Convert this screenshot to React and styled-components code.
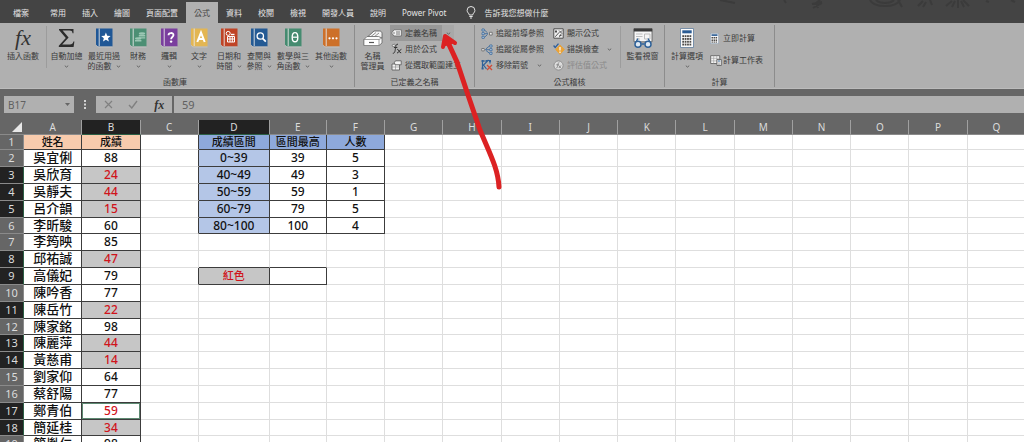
import React from "react";
import styled, { createGlobalStyle, css } from "styled-components";

const GlobalStyle = createGlobalStyle`
  * { box-sizing: border-box; }
  body { margin: 0; background: #fff; }
  body, button, input {
    font-family: "Noto Sans", "Noto Sans CJK TC", sans-serif;
  }
  button { border: 0; padding: 0; background: none; color: inherit; }
  svg { display: block; flex: none; }
`;

const Workbook = styled.div`
  position: relative;
  height: 100vh;
  display: flex;
  flex-direction: column;
  overflow: hidden;
`;

/* ---------- title tabs ---------- */

const TabBar = styled.nav`
  display: flex;
  align-items: stretch;
  height: 23px;
  flex: none;
  padding-top: 2px;
  background: #444;
`;

const Tab = styled.button`
  padding: 0 ${(p) => (p.$wide ? 13 : 8)}px;
  font-size: 8px;
  line-height: 20px;
  white-space: nowrap;
  color: ${(p) => (p.$active ? "#444" : "#e4e4e4")};
  background: ${(p) => (p.$active ? "#b0b0b0" : "transparent")};
`;

const TellMe = styled.label`
  display: flex;
  align-items: center;
  gap: 8px;
  padding-left: 12px;
  padding-bottom: 1px;
`;

const TellMeInput = styled.input`
  width: 90px;
  border: 0;
  padding: 0;
  background: none;
  font-size: 8px;
  color: #e4e4e4;
  &::placeholder { color: #e4e4e4; opacity: 1; }
`;

const Doodle = styled.div`
  flex: 1;
  display: flex;
  justify-content: flex-end;
  margin-top: -2px;
`;

/* ---------- ribbon ---------- */

const Ribbon = styled.div`
  display: flex;
  height: 66px;
  flex: none;
  padding: 2px 0 1px;
  background: #b0b0b0;
  border-bottom: 1px solid #bcbcbc;
  color: #3a3a3a;
`;

const Group = styled.section`
  display: flex;
  flex-direction: column;
  justify-content: space-between;
  padding-right: ${(p) => p.$right || 0}px;
  border-right: 1px solid #8c8c8c;
`;

const GroupBody = styled.div`
  display: flex;
  align-items: flex-start;
`;

const GroupTitle = styled.h2`
  margin: 0;
  font-size: 8px;
  font-weight: 400;
  line-height: 10px;
  text-align: center;
`;

const BigButton = styled.button`
  width: ${(p) => p.$w}px;
  display: flex;
  flex-direction: column;
  align-items: center;
  padding-top: 3px;
  font-size: 8px;
  line-height: 10px;
  white-space: nowrap;
`;

const BigIcon = styled.span`
  height: 20px;
  margin-bottom: 3px;
  display: flex;
  align-items: center;
`;

const LabelLine = styled.span`
  display: flex;
  align-items: center;
  gap: 4px;
  height: 10px;
`;

const Divider = styled.span`
  width: 1px;
  height: 42px;
  margin-top: 1px;
  background: #9c9c9c;
`;

const Stack = styled.div`
  display: flex;
  flex-direction: column;
  padding: ${(p) => p.$pad || 0}px 0 0 ${(p) => p.$left || 0}px;
  gap: ${(p) => p.$gap || 0}px;
  width: ${(p) => p.$w}px;
`;

const SmallButton = styled.button`
  display: flex;
  align-items: center;
  align-self: flex-start;
  gap: ${(p) => p.$gap || 3}px;
  height: 16px;
  padding: 0 5px 0 1px;
  font-size: 8px;
  line-height: 16px;
  white-space: nowrap;
  color: ${(p) => (p.disabled ? "#8a8a8a" : "#3a3a3a")};
  background: ${(p) => (p.$hot ? "#989898" : "transparent")};
`;

const SplitRow = styled.div`
  display: flex;
  align-items: stretch;
`;

const SplitArrow = styled.button`
  display: flex;
  align-items: center;
  justify-content: center;
  width: 12px;
  background: #a8a8a8;
`;

const ChevronGap = styled.span`
  padding-left: ${(p) => p.$x}px;
`;

/* ---------- formula bar ---------- */

const FormulaBar = styled.div`
  display: flex;
  align-items: center;
  height: 31px;
  flex: none;
  padding: 0 0 0 4px;
  background: #666;
`;

const field = css`
  height: 17px;
  background: #b0b0b0;
  border: 0;
`;

const NameBox = styled.div`
  ${field}
  width: 70px;
  display: flex;
  align-items: center;
  padding: 0 4px;
`;

const BarInput = styled.input`
  flex: 1;
  min-width: 0;
  height: 17px;
  border: 0;
  padding: 0;
  background: none;
  font-size: ${(p) => p.$size}px;
  color: #606060;
`;

const Dots = styled.span`
  width: 22px;
  display: flex;
  justify-content: center;
`;

const Actions = styled.div`
  ${field}
  width: 76px;
  margin-right: 2px;
  display: flex;
  align-items: center;
  justify-content: space-around;
`;

const FormulaField = styled.div`
  ${field}
  flex: 1;
  display: flex;
  padding-left: 8px;
`;

/* ---------- sheet ---------- */

const SheetArea = styled.main`
  flex: 1;
  min-height: 0;
  overflow: hidden;
  background: #fff;
`;

const Sheet = styled.table`
  width: calc(100% + 2px);
  table-layout: fixed;
  border-collapse: separate;
  border-spacing: 0;
`;

const Col = styled.col`
  width: ${(p) => (p.$w ? `${p.$w}px` : "auto")};
`;

const ColHead = styled.th`
  height: 14px;
  padding: 0;
  font-size: 10px;
  font-weight: 400;
  line-height: 13px;
  color: #dcdcdc;
  background: ${(p) => (p.$on ? "#222" : "#666")};
  border-right: 1px solid #a0a0a0;
  border-bottom: 1px solid ${(p) => (p.$on ? "#2c6046" : "#8a8a8a")};
`;

const Corner = styled.th`
  height: 14px;
  padding: 2px 2px 2px 0;
  background: #666;
  border-bottom: 1px solid #8a8a8a;
  svg { margin-left: auto; }
`;

/* Every sixth row is one pixel shorter, which averages out the scaled row height. */
const Row = styled.tr`
  height: 17px;
  &:first-child { height: 15px; }
  &:nth-child(6n) { height: 16px; }
`;

const RowHead = styled.th`
  padding: 0;
  font-size: 11px;
  font-weight: 400;
  line-height: 14px;
  color: #dcdcdc;
  background: ${(p) => (p.$on ? "#222" : "#666")};
  border-right: 1px solid ${(p) => (p.$on ? "#2c6046" : "#8a8a8a")};
  border-bottom: 1px solid #8a8a8a;
`;

const fills = {
  peach: "#f8cbad",
  blue: "#8ea9db",
  sky: "#b4c6e7",
  gray: "#c6c6c6",
};

const Cell = styled.td`
  padding: 0 0 ${(p) => (p.$name ? 2 : 0)}px;
  text-align: center;
  white-space: nowrap;
  font-size: ${(p) => (p.$name ? 13 : p.$label ? 11 : 12)}px;
  font-weight: 500;
  line-height: ${(p) => (p.$name ? 12 : 14)}px;
  color: ${(p) => (p.$red ? "#d0141c" : "#111")};
  background: ${(p) => fills[p.$fill] || "#fff"};
  border-right: 1px solid ${(p) => (p.$right ? "#3c3c3c" : "#dedede")};
  border-bottom: 1px solid ${(p) => (p.$bottom ? "#3c3c3c" : "#dedede")};
  ${(p) => p.$active && css`box-shadow: inset 0 0 0 1px #5e8a72;`}
`;

const Annotation = styled.svg`
  position: absolute;
  left: 0;
  top: 0;
  pointer-events: none;
`;

/* ---------- icons ---------- */

const Chevron = ({ color = "#666" }) => (
  <svg width="5" height="3" viewBox="0 0 5 3" aria-hidden="true">
    <path d="M.8.7 2.5 2.1 4.2.7" fill="none" stroke={color} strokeWidth="1" />
  </svg>
);

const FxGlyph = styled.span`
  display: block;
  font: italic ${(p) => p.$s}px "Liberation Serif", serif;
  line-height: ${(p) => (p.$b ? 12 : 20)}px;
  font-weight: ${(p) => (p.$b ? 700 : 400)};
  color: #333;
`;

const Sigma = () => (
  <svg width="17" height="20" viewBox="0 0 17 20">
    <path d="M1 1h14.5v4.2h-1c-.3-2-1-2.6-3-2.6H4.6l6 6.8-6.4 7.2h7.6c2.200 0 3-.8 3.600-3h1L15.600 19H.8v-1.200l7-7.900L1 2z" fill="#2c2c2c" />
  </svg>
);

const Book = ({ color, children }) => (
  <svg width="18" height="20" viewBox="0 0 18 20">
    <path d="M1 .5h16.500v18H3.500a2.500 2.500 0 0 1-2.500-2z" fill={color} />
    <path d="M1.300 17.200c.5 1.300 1.300 1.800 2.500 1.800h13.700" fill="none" stroke="#c8c8c8" strokeWidth=".8" />
    <path d="M4.200.5v17.500" stroke="#e6e6e6" strokeWidth=".9" />
    {children}
  </svg>
);

const bookArt = {
  star: <path d="m10.900 4.600 1.300 3.200 3.400.2-2.600 2.200.9 3.400-3-1.900-2.900 1.900.8-3.400-2.600-2.200 3.400-.2z" fill="#fff" />,
  coins: (
    <g fill="#9cc7b4">
      <ellipse cx="13" cy="5.500" rx="3.200" ry="1.300" />
      <path d="M9.800 7h6.400v1.500H9.800zM9.800 9.300h6.400v1.300H9.800zM6 12h6.400v1.400H6z" />
      <ellipse cx="9.200" cy="10.500" rx="3.200" ry="1.200" />
    </g>
  ),
  question: (
    <g>
      <path d="M8.500 7.300c0-3 5-3 5-.2 0 1.900-2.400 2-2.400 4.100" fill="none" stroke="#fff" strokeWidth="1.800" />
      <circle cx="11.100" cy="13.600" r="1.200" fill="#fff" />
    </g>
  ),
  calendar: (
    <g fill="none" stroke="#fff">
      <circle cx="8.200" cy="5.400" r="2" strokeWidth="1" />
      <path d="M7.500 8.500h7v5.500h-7zM7.500 11h7M10 8.500V14M12.300 8.500V14" strokeWidth="1" />
      <path d="M11 6.500h3.500" strokeWidth="1.400" />
    </g>
  ),
  lens: (
    <g fill="none" stroke="#fff">
      <circle cx="10.300" cy="8" r="3.200" strokeWidth="1.300" />
      <path d="m12.600 10.300 3.200 3.400" strokeWidth="1.700" />
    </g>
  ),
  theta: (
    <g fill="none" stroke="#fff" strokeWidth="1.400">
      <ellipse cx="11" cy="9.200" rx="2.800" ry="4.600" />
      <path d="M8.500 9.200h5" strokeWidth="1.200" />
    </g>
  ),
  dots: (
    <g fill="#fff">
      <circle cx="7.500" cy="10.300" r="1.100" />
      <circle cx="11" cy="10.300" r="1.100" />
      <circle cx="14.500" cy="10.300" r="1.100" />
    </g>
  ),
  letter: <path d="M7.300 14 11 4.600 14.700 14M8.700 11h4.600" fill="none" stroke="#fff" strokeWidth="2" />,
};

const NameManagerIcon = () => (
  <svg width="20" height="18" viewBox="0 0 20 18">
    <path d="M5 7.500 11 2h5.500c1.500 0 2.500 1 2.500 2.500V9z" fill="#f4f4f4" stroke="#555" strokeWidth=".8" />
    <path d="m8 7.500 5-4M11 8l5-4" stroke="#777" strokeWidth=".8" />
    <path d="M1 10.500 4 7.500h11.500L19 9v5l-3 2.500H1z" fill="#fafafa" stroke="#666" strokeWidth=".8" />
    <path d="M1 10.500h15v6H1zM16 10.500 19 9" fill="#fff" stroke="#777" strokeWidth=".7" />
    <path d="M6 13.500h5" stroke="#555" strokeWidth="1.200" />
  </svg>
);

const TagIcon = () => (
  <svg width="11" height="10" viewBox="0 0 11 10">
    <path d="M3 1.800h7.400v6.200H3L.6 5z" fill="#f2f2f2" stroke="#666" strokeWidth=".8" />
    <circle cx="3" cy="5" r=".7" fill="#555" />
    <path d="M5 4h4M5 6h4" stroke="#555" strokeWidth=".8" />
  </svg>
);

const UseFormulaIcon = () => (
  <svg width="11" height="12" viewBox="0 0 11 12">
    <path d="M1 2.200 3.500 1l1 1.500L2 4z" fill="#eee" stroke="#555" strokeWidth=".6" />
    <path d="M7 1.200C5 .8 4.800 3 4.500 5S4 10.600 1.800 10.300M3 4.500h3.300M6.200 6.300c1.600-.5 1.800 4 4 3.500M10.400 6.300c-1.600 0-2.400 3.700-4.400 3.700" fill="none" stroke="#333" strokeWidth="1" />
  </svg>
);

const FromSelectionIcon = () => (
  <svg width="11" height="11" viewBox="0 0 11 11">
    <path d="M1 4h7.500v6H1z" fill="#f4f4f4" stroke="#555" strokeWidth=".8" />
    <path d="M4.500.8h5.700v4H4.500L3.200 2.800z" fill="#f4f4f4" stroke="#555" strokeWidth=".8" />
    <path d="M1 7h7.500M4.500 5v5" stroke="#888" strokeWidth=".6" />
  </svg>
);

const PrecedentsIcon = () => (
  <svg width="12" height="11" viewBox="0 0 12 11" fill="none" stroke="#2f6299">
    <path d="M1 1h2.200v2H1zM1 4.700h2.200v2H1zM1 8.300h2.200v2H1z" fill="#dde6ef" strokeWidth=".8" />
    <path d="m3.500 2 3 2.800M3.500 5.700h3.500M3.500 9.300l3-2.800" strokeWidth=".8" />
    <path d="M8.500 4.300h2.700v2.700H8.500z" fill="#eee" stroke="#666" strokeWidth=".8" />
  </svg>
);

const DependentsIcon = () => (
  <svg width="12" height="11" viewBox="0 0 12 11" fill="none" stroke="#2f6299">
    <path d="M8.800 1H11v2H8.800zM8.800 4.700H11v2H8.800zM8.800 8.300H11v2H8.800z" fill="#dde6ef" strokeWidth=".8" />
    <path d="m8.500 2-3.500 2.800M4 5.700h4.500M8.500 9.300 5 6.500" strokeWidth=".8" />
    <path d="M.8 4.500h2.400v2.400H.8z" fill="#eee" stroke="#666" strokeWidth=".8" />
  </svg>
);

const RemoveArrowsIcon = () => (
  <svg width="12" height="12" viewBox="0 0 12 12" fill="none">
    <path d="M1.500 1v9M1.500 2H6M7.500 1 2.500 6l3 4M5 1.500h4v3" stroke="#2f6299" strokeWidth="1.200" />
    <path d="M.6 1h2v2h-2zM8 1h2v2H8zM.6 8.500h2v2h-2z" fill="#2f6299" />
    <path d="m6 6 5 5M11 6l-5 5" stroke="#cf4b37" strokeWidth="1.300" />
  </svg>
);

const ShowFormulasIcon = () => (
  <svg width="11" height="11" viewBox="0 0 11 11" fill="none" stroke="#444">
    <path d="M.8.8h9.400v9.400H.8z" fill="#efefef" strokeWidth=".9" />
    <path d="M2 3.500h2M3 2v3M6 2.500l3 3M9 2.500l-2 2M2.200 8.800l4-4.500M6 9c1.300 0 1-3 2.500-3M6.500 7.500h2" strokeWidth=".9" />
  </svg>
);

const ErrorCheckIcon = () => (
  <svg width="12" height="12" viewBox="0 0 12 12" fill="none">
    <path d="M7 2 11.300 6.500 7 11.300 2.700 6.500z" fill="#e8a33a" stroke="#e8a33a" strokeWidth="1" strokeLinejoin="round" />
    <path d="M7 4v3.500M7 8.500V10" stroke="#fff" strokeWidth="1.200" />
    <path d="m.6 2.500 1.600 2L5.500.6" stroke="#2f5f9a" strokeWidth="1.300" />
  </svg>
);

const EvaluateIcon = () => (
  <svg width="11" height="11" viewBox="0 0 11 11" fill="none">
    <circle cx="5.500" cy="5.500" r="4.600" fill="#dcdcdc" stroke="#8a8a8a" strokeWidth=".9" />
    <path d="M6.200 2.500c-1.700-.2-1.200 5.800-3 5.600M3.300 4.800H6M5.800 5.500l2 2.500M8 5.500 5.800 8" stroke="#777" strokeWidth=".8" />
  </svg>
);

const WatchIcon = () => (
  <svg width="20" height="20" viewBox="0 0 20 20" fill="none">
    <path d="M1 .8h18v13H1z" fill="#f6f6f6" stroke="#555" strokeWidth=".8" />
    <path d="M.8.500h18.400v3H.8z" fill="#3a3a3a" />
    <path d="M3 6h6.500M3 8.500h6.500M3 11h4M11.500 6H17v5h-5.500z" stroke="#b8b8b8" strokeWidth=".9" />
    <path d="m3 14 2-3.500M17 14l-2-3.500M8.500 16h3" stroke="#2f6299" strokeWidth="1.400" />
    <circle cx="5" cy="16.200" r="3" fill="#dfe9f3" stroke="#2f6299" strokeWidth="1.500" />
    <circle cx="15" cy="16.200" r="3" fill="#dfe9f3" stroke="#2f6299" strokeWidth="1.500" />
  </svg>
);

const CalcIcon = ({ w, h, cols = 4 }) => (
  <svg width={w} height={h} viewBox="0 0 14 20" preserveAspectRatio="none">
    <path d="M.5.500h13v19H.5z" fill="#fbfbfb" stroke="#6d87a3" strokeWidth=".9" />
    <path d="M2.300 2.300h9.400v3H2.300z" fill="#2b5c94" />
    {[7.200, 10, 12.800, 15.600].map((y) =>
      Array.from({ length: cols }, (_, i) => (
        <rect key={`${y}-${i}`} x={2.300 + (i * 9.600) / cols} y={y} width={7 / cols} height="1.900" fill="#4c4a48" />
      ))
    )}
  </svg>
);

const CalcSheetIcon = () => (
  <svg width="12" height="11" viewBox="0 0 12 11" fill="none">
    <path d="M.7.700h9v7.800h-9z" fill="#f6f6f6" stroke="#555" strokeWidth=".8" />
    <path d="M.7 3.300h9M.7 5.900h9M3.700.700v7.800M6.700.700v7.800" stroke="#999" strokeWidth=".6" />
    <path d="M7 4.500h4.300v6H7z" fill="#fff" stroke="#555" strokeWidth=".8" />
    <path d="M8 6h2.300" stroke="#2b5c94" strokeWidth="1" />
    <path d="M8 8h2.300M8 9.300h2.300" stroke="#777" strokeWidth=".6" />
  </svg>
);

const BulbIcon = () => (
  <svg width="10" height="13" viewBox="0 0 10 13" fill="none" stroke="#e4e4e4">
    <path d="M3.300 9c0-1.700-2.200-2.300-2.200-4.600a3.900 3.900 0 0 1 7.800 0C8.900 6.700 6.700 7.300 6.700 9z" strokeWidth="1" />
    <path d="M3.300 10.500h3.400M4 12h2" strokeWidth="1" />
  </svg>
);

const DoodleArt = () => (
  <svg width="324" height="12" viewBox="0 0 324 12" fill="none" stroke="#3b3b3b" strokeWidth="2">
    <path d="M20 0l5 1 10 2M84 0l2 3M112 4l10-2M113 8l9-5M116 2l2 6M120 0l-4 3" />
    <path d="M170 0c4 8 26 8 30 0M176 0c4 4 14 4 18 0M198 0l4 7M218 6l5-5M226 2l-3 5M230 0l2 5" />
    <path d="M246 6l6-5M252 7l3-6M258 8V0M264 7l-3-6M269 6l-6-6M286 1l3 1M311 0l4 2" />
  </svg>
);

/* ---------- content ---------- */

const tabs = ["檔案", "常用", "插入", "繪圖", "頁面配置", "公式", "資料", "校閱", "檢視", "開發人員", "說明", "Power Pivot"];

const library = [
  { w: 36, lines: ["最近用過", "的函數"], color: "#1f5796", art: "star", inline: true },
  { w: 32, lines: ["財務"], color: "#4c8f74", art: "coins" },
  { w: 30, lines: ["邏輯"], color: "#7a3f9e", art: "question" },
  { w: 30, lines: ["文字"], color: "#e3b653", art: "letter" },
  { w: 30, lines: ["日期和", "時間"], color: "#bf4426", art: "calendar", inline: true },
  { w: 30, lines: ["查閱與", "參照"], color: "#245a94", art: "lens", inline: true },
  { w: 38, lines: ["數學與三", "角函數"], color: "#458b70", art: "theta", inline: true },
  { w: 38, lines: ["其他函數"], color: "#cd7029", art: "dots" },
];

const scores = [
  ["吳宜俐", 88], ["吳欣育", 24], ["吳靜夫", 44], ["呂介韻", 15], ["李昕駿", 60], ["李筠映", 85],
  ["邱祐誠", 47], ["高儀妃", 79], ["陳吟香", 77], ["陳岳竹", 22], ["陳家銘", 98], ["陳麗萍", 44],
  ["黃慈甫", 14], ["劉家仰", 64], ["蔡舒陽", 77], ["鄭青伯", 59], ["簡延桂", 34], ["簡胤仁", 98],
];

const bands = [
  ["0~39", 39, 5], ["40~49", 49, 3], ["50~59", 59, 1], ["60~79", 79, 5], ["80~100", 100, 4],
];

const columns = "ABCDEFGHIJKLMNOPQ".split("");
const columnWidths = { D: 71, E: 57 };

const boxed = { $right: true, $bottom: true };

function cellAt(col, row) {
  const score = scores[row - 2];
  const band = bands[row - 2];
  if (row === 1) {
    if (col === "A") return { text: "姓名", $fill: "peach", $label: true, ...boxed };
    if (col === "B") return { text: "成績", $fill: "peach", $label: true, ...boxed };
    if (col === "C") return { $right: true };
    const head = { D: "成績區間", E: "區間最高", F: "人數" }[col];
    if (head) return { text: head, $fill: "blue", $label: true, ...boxed };
    return {};
  }
  if (col === "A") return { text: score[0], $name: true, ...boxed };
  if (col === "B") {
    const low = score[1] < 60;
    const active = row === 17;
    return { text: score[1], $red: low, $fill: low && !active ? "gray" : undefined, $active: active, ...boxed };
  }
  if (band) {
    if (col === "C") return { $right: true };
    if (col === "D") return { text: band[0], $fill: "sky", ...boxed };
    if (col === "E") return { text: band[1], ...boxed };
    if (col === "F") return { text: band[2], ...boxed };
  }
  if (row === 8 && (col === "D" || col === "E")) return { $bottom: true };
  if (row === 9) {
    if (col === "C") return { $right: true };
    if (col === "D") return { text: "紅色", $label: true, $red: true, $fill: "gray", ...boxed };
    if (col === "E") return boxed;
  }
  return {};
}

const selectedRow = (row) => row === 9 || (row > 1 && scores[row - 2][1] < 60);

function FunctionButton({ w, lines, icon, arrow, inline }) {
  return (
    <BigButton $w={w}>
      <BigIcon>{icon}</BigIcon>
      {lines.map((line, i) => (
        <LabelLine key={line}>
          {line}
          {inline && i === lines.length - 1 && <Chevron />}
        </LabelLine>
      ))}
      {arrow && <LabelLine><Chevron /></LabelLine>}
    </BigButton>
  );
}

function SmallItem({ icon, children, ...rest }) {
  return (
    <SmallButton {...rest}>
      {icon}
      {children}
    </SmallButton>
  );
}

export default function App() {
  return (
    <Workbook>
      <GlobalStyle />
      <TabBar>
        {tabs.map((t, i) => (
          <Tab key={t} $wide={i === 0} $active={t === "公式"}>{t}</Tab>
        ))}
        <TellMe>
          <BulbIcon />
          <TellMeInput placeholder="告訴我您想做什麼" aria-label="告訴我您想做什麼" />
        </TellMe>
        <Doodle><DoodleArt /></Doodle>
      </TabBar>

      <Ribbon>
        <Group $right={4}>
          <GroupBody>
            <FunctionButton w={46} lines={["插入函數"]} icon={<FxGlyph $s={22}>fx</FxGlyph>} />
            <Divider />
            <FunctionButton w={39} lines={["自動加總"]} icon={<Sigma />} arrow />
            {library.map((b) => (
              <FunctionButton
                key={b.art}
                w={b.w}
                lines={b.lines}
                inline={b.inline}
                arrow={!b.inline}
                icon={<Book color={b.color}>{bookArt[b.art]}</Book>}
              />
            ))}
          </GroupBody>
          <GroupTitle>函數庫</GroupTitle>
        </Group>

        <Group>
          <GroupBody>
            <FunctionButton w={35} lines={["名稱", "管理員"]} icon={<NameManagerIcon />} />
            <Stack $w={84}>
              <SplitRow>
                <SmallItem icon={<TagIcon />} $hot>定義名稱</SmallItem>
                <SplitArrow aria-label="定義名稱選項"><Chevron /></SplitArrow>
              </SplitRow>
              <SmallItem icon={<UseFormulaIcon />}>用於公式</SmallItem>
              <SmallItem icon={<FromSelectionIcon />}>從選取範圍建立</SmallItem>
            </Stack>
          </GroupBody>
          <GroupTitle>已定義之名稱</GroupTitle>
        </Group>

        <Group>
          <GroupBody>
            <Stack $w={77} $left={5}>
              <SmallItem icon={<PrecedentsIcon />}>追蹤前導參照</SmallItem>
              <SmallItem icon={<DependentsIcon />}>追蹤從屬參照</SmallItem>
              <SmallItem icon={<RemoveArrowsIcon />}>
                移除箭號<ChevronGap $x={6}><Chevron /></ChevronGap>
              </SmallItem>
            </Stack>
            <Stack $w={68}>
              <SmallItem icon={<ShowFormulasIcon />}>顯示公式</SmallItem>
              <SmallItem icon={<ErrorCheckIcon />} $gap={2}>
                錯誤檢查<ChevronGap $x={6}><Chevron /></ChevronGap>
              </SmallItem>
              <SmallItem icon={<EvaluateIcon />} disabled>評估值公式</SmallItem>
            </Stack>
            <Divider />
            <FunctionButton w={43} lines={["監看視窗"]} icon={<WatchIcon />} />
          </GroupBody>
          <GroupTitle>公式稽核</GroupTitle>
        </Group>

        <Group>
          <GroupBody>
            <FunctionButton w={44} lines={["計算選項"]} icon={<CalcIcon w={14} h={20} />} arrow />
            <Stack $w={65} $pad={5} $gap={6}>
              <SmallItem icon={<CalcIcon w={9} h={11} cols={3} />} $gap={4}>立即計算</SmallItem>
              <SmallItem icon={<CalcSheetIcon />} $gap={1}>計算工作表</SmallItem>
            </Stack>
          </GroupBody>
          <GroupTitle>計算</GroupTitle>
        </Group>
      </Ribbon>

      <FormulaBar>
        <NameBox>
          <BarInput $size={10} defaultValue="B17" aria-label="名稱方塊" />
          <svg width="5" height="3" viewBox="0 0 5 3"><path d="M0 0h5L2.500 3z" fill="#666" /></svg>
        </NameBox>
        <Dots>
          <svg width="2" height="9" viewBox="0 0 2 9"><path d="M0 0h2v2H0zM0 3.500h2v2H0zM0 7h2v2H0z" fill="#d4d4d4" /></svg>
        </Dots>
        <Actions>
          <button aria-label="取消">
            <svg width="9" height="9" viewBox="0 0 9 9"><path d="m1 1 7 7M8 1 1 8" stroke="#808080" strokeWidth="1.200" /></svg>
          </button>
          <button aria-label="輸入">
            <svg width="10" height="9" viewBox="0 0 10 9"><path d="m1 5 2.800 3L9 1" fill="none" stroke="#808080" strokeWidth="1.400" /></svg>
          </button>
          <button aria-label="插入函數"><FxGlyph $s={12} $b>fx</FxGlyph></button>
        </Actions>
        <FormulaField>
          <BarInput $size={11} defaultValue="59" aria-label="資料編輯列" />
        </FormulaField>
      </FormulaBar>

      <SheetArea>
        <Sheet>
          <colgroup>
            <Col $w={24} />
            {columns.map((c) => <Col key={c} $w={columnWidths[c]} />)}
          </colgroup>
          <thead>
            <tr>
              <Corner>
                <svg width="10" height="10" viewBox="0 0 10 10"><path d="M10 0v10H0z" fill="#e8e8e8" /></svg>
              </Corner>
              {columns.map((c) => <ColHead key={c} $on={c === "B" || c === "D"}>{c}</ColHead>)}
            </tr>
          </thead>
          <tbody>
            {Array.from({ length: 19 }, (_, i) => i + 1).map((row) => (
              <Row key={row}>
                <RowHead $on={selectedRow(row)}>{row}</RowHead>
                {columns.map((c) => {
                  const { text, ...look } = cellAt(c, row);
                  return <Cell key={c} {...look}>{text}</Cell>;
                })}
              </Row>
            ))}
          </tbody>
        </Sheet>
      </SheetArea>

      <Annotation width="520" height="200" viewBox="0 0 520 200" fill="none" stroke="#dc2223" strokeLinecap="round" aria-hidden="true">
        <path d="M446 38 457 62 468 95 480 130C489 152 498 168 499 187" strokeWidth="5" />
        <path d="M443 47 445 36 455 43" fill="#dc2223" strokeWidth="4" strokeLinejoin="round" />
      </Annotation>
    </Workbook>
  );
}
